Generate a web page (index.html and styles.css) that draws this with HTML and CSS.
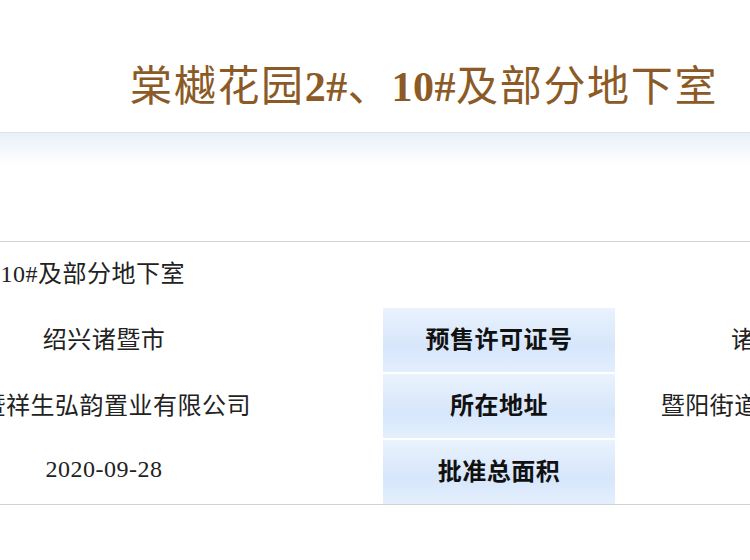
FILE: index.html
```html
<!DOCTYPE html>
<html lang="zh-CN">
<head>
<meta charset="utf-8">
<title>棠樾花园2#、10#及部分地下室</title>
<link rel="stylesheet" href="styles.css">
</head>
<body>
<div class="page">
  <header class="header">
    <h1 class="title">棠樾花园<span class="latin">2#</span>、<span class="latin">10#</span>及部分地下室</h1>
  </header>
  <div class="band"></div>
  <section class="info">
    <div class="grid">
      <div class="label">项目名称</div>
      <div class="value span3">棠樾花园2#、10#及部分地下室</div>

      <div class="label">所在区域</div>
      <div class="value">绍兴诸暨市</div>
      <div class="label">预售许可证号</div>
      <div class="value">诸暨售许字(2020)第073号</div>

      <div class="label">开发企业</div>
      <div class="value">诸暨祥生弘韵置业有限公司</div>
      <div class="label">所在地址</div>
      <div class="value">暨阳街道浦阳江东路以东、望云路以北</div>

      <div class="label">发证日期</div>
      <div class="value">2020-09-28</div>
      <div class="label">批准总面积</div>
      <div class="value"></div>
    </div>
  </section>
</div>
</body>
</html>
```
FILE: styles.css
```css
html, body {
  margin: 0;
  padding: 0;
  background: #fff;
}
body {
  width: 750px;
  height: 560px;
  overflow: hidden;
  font-family: "Liberation Serif", "Noto Sans CJK SC", serif;
}
.page {
  width: 750px;
}
.header {
  height: 132px;
  box-sizing: border-box;
  padding-top: 62px;
}
.title {
  margin: 0;
  padding-left: 130px;
  font-size: 42px;
  line-height: 50px;
  font-weight: normal;
  color: #8c5a26;
  white-space: nowrap;
  letter-spacing: 1.7px;
}
.title .latin {
  font-weight: bold;
  letter-spacing: 0.5px;
}
.band {
  height: 34px;
  border-top: 1px solid #d7e4f2;
  background: linear-gradient(to bottom, #e9f0f8 0%, #f3f7fc 45%, #ffffff 100%);
}
.info {
  margin-top: 74px;
  border-top: 1px solid #d2d2d2;
  border-bottom: 1px solid #d2d2d2;
  overflow: hidden;
}
.grid {
  display: grid;
  grid-template-columns: 232px 554px 232px 504px;
  grid-auto-rows: 64px;
  column-gap: 2px;
  row-gap: 2px;
  margin-left: -407px;
  width: max-content;
}
.label {
  display: flex;
  align-items: center;
  justify-content: center;
  box-sizing: border-box;
  padding-bottom: 6px;
  font-size: 24px;
  font-weight: bold;
  color: #111;
  letter-spacing: 0.5px;
  background: linear-gradient(to bottom, #eaf3fe 0%, #dbe9fb 45%, #d6e6fb 60%, #e4effd 100%);
  white-space: nowrap;
}
.value {
  display: flex;
  align-items: center;
  justify-content: center;
  box-sizing: border-box;
  padding-bottom: 6px;
  font-size: 24px;
  color: #222;
  letter-spacing: 0.5px;
  white-space: nowrap;
}
.span3 {
  grid-column: span 3;
  justify-content: flex-start;
  padding-left: 26px;
}
```
